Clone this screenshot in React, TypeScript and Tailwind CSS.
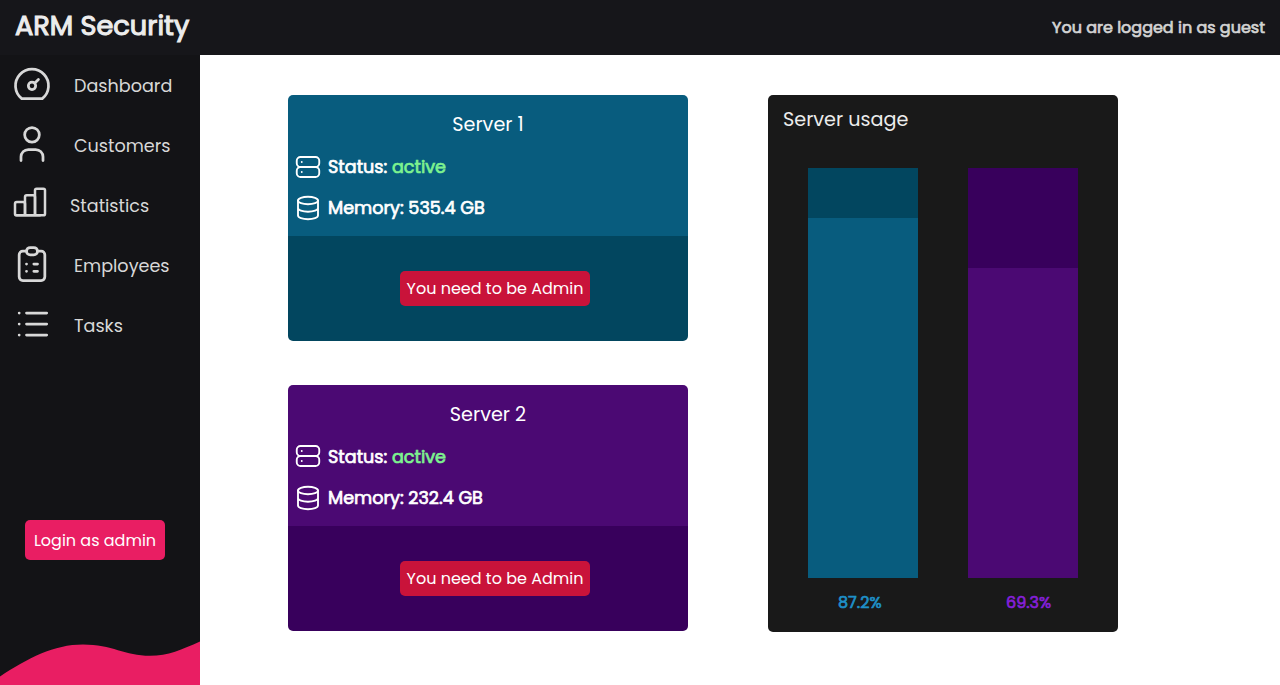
import type { ReactNode } from "react";

function Icon({ className, children }: { className: string; children: ReactNode }) {
  return (
    <svg viewBox="0 0 24 24" fill="none" stroke="currentColor" strokeWidth="1.5" strokeLinecap="round" strokeLinejoin="round" className={`shrink-0 ${className}`}>
      {children}
    </svg>
  );
}

const navItems = [
  {
    label: "Dashboard",
    icon: "size-11 -translate-y-px",
    shape: (
      <>
        <circle cx="12" cy="13" r="2" />
        <path d="M13.45 11.55L15.5 9.5M6.4 20a9 9 0 1 1 11.2 0z" />
      </>
    ),
  },
  {
    label: "Customers",
    icon: "size-11 -translate-y-px",
    shape: (
      <>
        <circle cx="12" cy="7" r="4" />
        <path d="M6 21v-2a4 4 0 0 1 4-4h4a4 4 0 0 1 4 4v2" />
      </>
    ),
  },
  {
    label: "Statistics",
    icon: "size-10 -translate-y-[3px]",
    shape: (
      <>
        <rect x="3" y="12" width="6" height="8" rx="1" />
        <rect x="9" y="8" width="6" height="12" rx="1" />
        <rect x="15" y="4" width="6" height="16" rx="1" />
        <path d="M4 20h14" />
      </>
    ),
  },
  {
    label: "Employees",
    icon: "size-11 -translate-y-px",
    shape: (
      <>
        <path d="M9 5H7a2 2 0 0 0-2 2v12a2 2 0 0 0 2 2h10a2 2 0 0 0 2-2V7a2 2 0 0 0-2-2h-2" />
        <rect x="9" y="3" width="6" height="4" rx="2" />
        <path d="M9 12h.01M13 12h2M9 16h.01M13 16h2" />
      </>
    ),
  },
  {
    label: "Tasks",
    icon: "size-11 -translate-y-px",
    shape: <path d="M9 6h11M9 12h11M9 18h11M5 6v.01M5 12v.01M5 18v.01" />,
  },
];

const servers = [
  { name: "Server 1", memory: "535.4 GB", top: "bg-[#085c7e]", bottom: "bg-[#02465f]", statusIcon: "" },
  { name: "Server 2", memory: "232.4 GB", top: "bg-[#4b0973]", bottom: "bg-[#38005c]", statusIcon: "-translate-y-px" },
];

const usage = [
  { value: "87.2%", track: "bg-[#02465f]", fill: "bg-[#085c7e]", height: "h-[360px]", text: "text-[#1e90c8] pl-[30px]" },
  { value: "69.3%", track: "bg-[#38005c]", fill: "bg-[#4b0973]", height: "h-[310px]", text: "text-[#8420d8] pl-[38px]" },
];

export default function App() {
  return (
    <div className="flex h-[685px] w-full flex-col overflow-hidden bg-white font-[Poppins,Inter,sans-serif]">
      <header className="flex h-[55px] shrink-0 items-center justify-between bg-[#16161a] px-[15px]">
        <h1 className="pb-[3px] text-[27.2px] leading-none text-[#ececec] [-webkit-text-stroke:1.1px_currentColor]">ARM Security</h1>
        <p className="text-[16px] leading-none text-[#d3d3d3] [-webkit-text-stroke:0.7px_currentColor]">You are logged in as guest</p>
      </header>
      <div className="flex min-h-0 flex-1">
        <aside className="flex w-[200px] shrink-0 flex-col bg-[#131316]">
          <nav>
            {navItems.map((item) => (
              <a key={item.label} className="flex h-[60px] items-center gap-5 pl-2.5 text-[#d8d8d8]">
                <Icon className={item.icon}>{item.shape}</Icon>
                <span className="translate-y-px text-[17.6px] leading-[18px]">{item.label}</span>
              </a>
            ))}
          </nav>
          <button className="ml-[25px] mt-[165px] h-10 w-[140px] shrink-0 rounded-[5px] bg-[#e91e63] pt-px text-[16px] text-white">
            Login as admin
          </button>
          <svg viewBox="0 0 200 45" className="mt-auto h-[45px] w-[200px] shrink-0 fill-[#e91e63]">
            <path d="M0 36.5C28 18 54 4.5 83 4.5C112 4.5 125 15.8 150 15.8C168 15.8 182 9.5 200 1.5V45H0z" />
          </svg>
        </aside>
        <main className="flex items-start gap-20 pl-[88px] pt-10">
          <div className="flex flex-col gap-11">
            {servers.map((server) => (
              <section key={server.name} className="w-[400px] overflow-hidden rounded-[5px] text-white">
                <div className={`h-[141px] pt-[15px] ${server.top}`}>
                  <h2 className="text-center text-[19.2px] leading-[30px]">{server.name}</h2>
                  <div className="mt-3 flex h-[30px] items-center gap-[5px] pl-[5px]">
                    <Icon className={`size-[30px] ${server.statusIcon}`}>
                      <rect x="3" y="4" width="18" height="8" rx="3" />
                      <rect x="3" y="12" width="18" height="8" rx="3" />
                      <path d="M7 8v.01M7 16v.01" />
                    </Icon>
                    <p className="text-[17.6px] leading-[30px] [-webkit-text-stroke:0.7px_currentColor]">
                      Status: <span className="text-[#7df28f]">active</span>
                    </p>
                  </div>
                  <div className="mt-[11px] flex h-[30px] items-center gap-[5px] pl-[5px]">
                    <Icon className="size-[30px]">
                      <ellipse cx="12" cy="6" rx="8" ry="3" />
                      <path d="M4 6v6a8 3 0 0 0 16 0V6M4 12v6a8 3 0 0 0 16 0v-6" />
                    </Icon>
                    <p className="text-[17.6px] leading-[30px] [-webkit-text-stroke:0.7px_currentColor]">Memory: {server.memory}</p>
                  </div>
                </div>
                <div className={`h-[105px] pl-28 pt-[35px] ${server.bottom}`}>
                  <button className="block h-[35px] w-[190px] rounded-[5px] bg-[#c9133a] text-[16px] text-white">
                    You need to be Admin
                  </button>
                </div>
              </section>
            ))}
          </div>
          <section className="h-[537px] w-[350px] rounded-[5px] bg-[#191919]">
            <h2 className="pl-[15px] pt-2.5 text-[19.2px] leading-[30px] text-[#ececec]">Server usage</h2>
            <div className="mt-[33px] flex gap-[50px] pl-10">
              {usage.map((bar) => (
                <div key={bar.value} className="w-[110px]">
                  <div className={`flex h-[410px] items-end ${bar.track}`}>
                    <div className={`w-full ${bar.height} ${bar.fill}`} />
                  </div>
                  <p className={`mt-[15px] text-[16px] leading-5 [-webkit-text-stroke:0.7px_currentColor] ${bar.text}`}>{bar.value}</p>
                </div>
              ))}
            </div>
          </section>
        </main>
      </div>
    </div>
  );
}
